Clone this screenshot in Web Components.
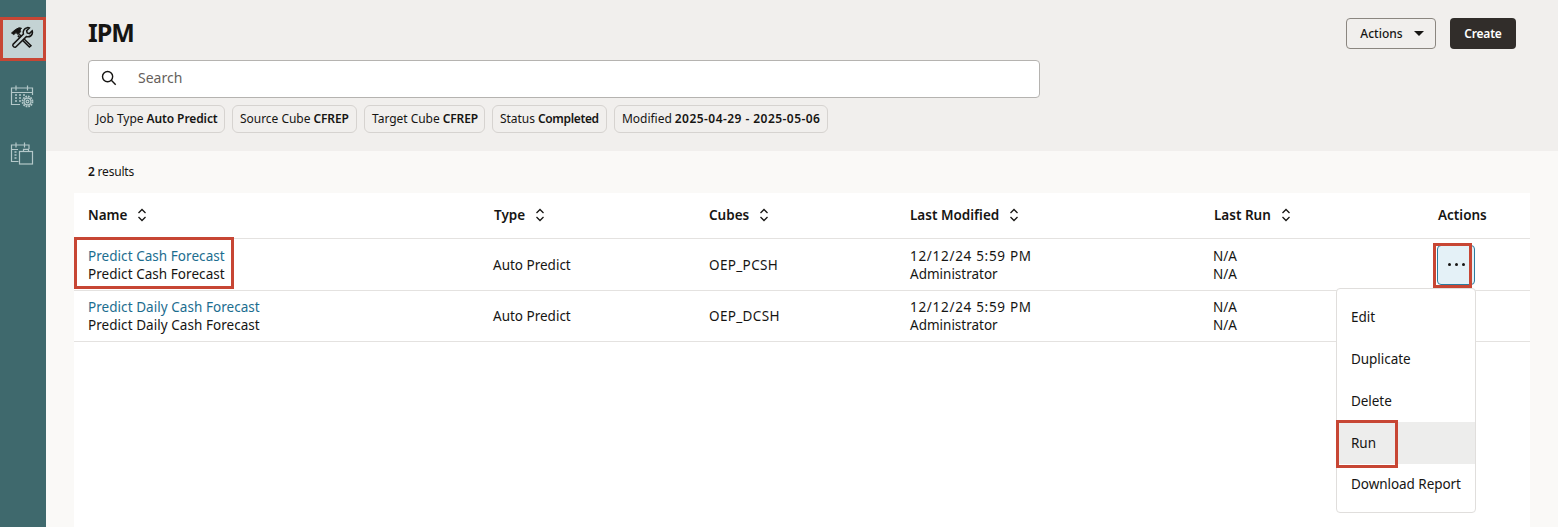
<!DOCTYPE html>
<html lang="en">
<head>
<meta charset="utf-8">
<title>IPM</title>
<style>
  html, body { margin: 0; height: 100%; overflow: hidden; }
  body { font-family: "Noto Sans", "Liberation Sans", sans-serif; color: #161513; }
  ipm-page { height: 527px; }
</style>
</head>
<body>
<ipm-page>
  <side-nav slot="nav"></side-nav>
  <page-header slot="header" title-text="IPM">
    <filter-chip label="Job Type" value="Auto Predict" width="137"></filter-chip>
    <filter-chip label="Source Cube" value="CFREP" width="125"></filter-chip>
    <filter-chip label="Target Cube" value="CFREP" width="121"></filter-chip>
    <filter-chip label="Status" value="Completed" width="115" spacing="-0.35"></filter-chip>
    <filter-chip label="Modified" value="2025-04-29 - 2025-05-06" width="214" spacing="0.45"></filter-chip>
  </page-header>
  <results-table slot="content">
    <job-row name="Predict Cash Forecast" type="Auto Predict" cubes="OEP_PCSH" marked></job-row>
    <job-row name="Predict Daily Cash Forecast" type="Auto Predict" cubes="OEP_DCSH"></job-row>
  </results-table>
</ipm-page>

<script>
class IpmPage extends HTMLElement {
  constructor() {
    super();
    this.attachShadow({ mode: 'open' });
    this.shadowRoot.innerHTML = `
      <style>
        :host { display: flex; width: 100%; background: #faf9f7; }
        .main { flex: 1; min-width: 0; display: flex; flex-direction: column; }
      </style>
      <slot name="nav"></slot>
      <div class="main">
        <slot name="header"></slot>
        <slot name="content"></slot>
      </div>
    `;
  }
}

class SideNav extends HTMLElement {
  constructor() {
    super();
    this.attachShadow({ mode: 'open' });
    this.shadowRoot.innerHTML = `
      <style>
        :host { display: flex; flex-direction: column; align-items: stretch; width: 46px; flex: none; background: #3f696d; padding-top: 17px; box-sizing: border-box; }
        .item { height: 44px; display: flex; align-items: center; justify-content: center; margin-bottom: 13px; box-sizing: border-box; padding-right: 2px; }
        .active { background: #c4d3d4; border: 3px solid #c74634; padding: 0 2px 4px 0; }
        svg { display: block; width: 24px; height: 24px; fill: none; stroke: #b4c8c9; stroke-width: 1.2; }
      </style>
      <div class="item active">
        <svg viewBox="0 0 24 24" style="stroke:#161513;stroke-width:1.5">
          <path d="M9.2 9.2 L21 20.6 L19.4 22 L7.8 10.6" />
          <path d="M1.5 8 L5.5 4.5 L9 2.8 L11.5 3.2 L10 5 L10.6 6.6 L8.2 9.6 L6 7.6 L3.8 9.6 Z" fill="#161513" stroke-width="1"/>
          <path d="M3 19.4 L13.4 9 C12.6 6.4 14 3.2 17 2.7 C18 2.5 18.8 2.6 19.4 2.9 L16.6 5.8 L17.2 8 L19.4 8.6 L22.2 5.8 C22.6 6.8 22.6 7.8 22.2 8.9 C21.2 11.3 18.6 12.2 16.3 11.6 L5.8 22 C4.6 23 2 21.2 3 19.4 Z" fill="#c4d3d4"/>
        </svg>
      </div>
      <div class="item">
        <svg viewBox="0 0 24 24">
          <path d="M10 20.5 H1.5 V4 H22.5 V11" />
          <path d="M6 1.5 V6.5 M17.5 1.5 V6.5 M1.5 8.5 H22.5" />
          <path d="M5 11 H7 M9 11 H11 M13 11 H15 M5 14 H7 M9 14 H11 M5 17 H7 M9 17 H11" stroke-width="1.6" />
          <circle cx="17.5" cy="17.5" r="5" stroke-width="1.8" stroke-dasharray="1.7 .9" />
          <circle cx="17.5" cy="17.5" r="3.4" />
          <circle cx="17.5" cy="17.5" r="1.4" />
        </svg>
      </div>
      <div class="item">
        <svg viewBox="0 0 24 24">
          <path d="M8.5 20.5 H1.5 V4 H19 V8" />
          <path d="M6 1.5 V6.5 M14.5 1.5 V6.5 M1.5 8.5 H8" />
          <path d="M4.5 11 H6.5 M4.5 14 H6.5 M4.5 17 H6.5" stroke-width="1.6" />
          <rect x="9.5" y="10.5" width="13" height="12.5" />
          <path d="M13.5 10.5 V8.3 H18.5 V10.5" />
        </svg>
      </div>
    `;
  }
}

class PageHeader extends HTMLElement {
  constructor() {
    super();
    this.attachShadow({ mode: 'open' });
  }

  connectedCallback() {
    const titulo = this.getAttribute('title-text') || '';
    this.shadowRoot.innerHTML = `
      <style>
        :host { display: block; height: 151px; box-sizing: border-box; background: #f1efed; padding: 18px 42px 0 42px; }
        .top { display: flex; justify-content: space-between; align-items: flex-start; height: 42px; }
        h1 { margin: -1px 0 0; font-size: 25px; line-height: 31px; font-weight: 700; letter-spacing: -1px; }
        .buttons { display: flex; gap: 14px; }
        button { font: 500 12px/1 "Noto Sans", "Liberation Sans", sans-serif; height: 31px; border-radius: 4px; box-sizing: border-box; padding: 0; color: #161513; display: flex; align-items: center; justify-content: center; }
        .actions { width: 90px; background: transparent; border: 1px solid #8b8680; gap: 11px; padding-left: 2px; }
        .actions i { border: 5px solid transparent; border-top: 5px solid #161513; border-bottom: 0; display: block; }
        .create { width: 66px; background: #312d2a; border: 0; color: #fff; font-weight: 600; letter-spacing: -0.2px; }
        .search { width: 952px; height: 38px; box-sizing: border-box; background: #fff; border: 1px solid #b5b3b0; border-radius: 4px; display: flex; align-items: center; padding: 0 0 2px 12px; font-size: 14px; color: #665f5b; }
        .search svg { width: 16px; height: 16px; margin-right: 21px; flex: none; fill: none; stroke: #161513; stroke-width: 1.5; }
        .search span { margin-bottom: 2px; }
        .chips { display: flex; gap: 7px; margin-top: 7px; }
      </style>
      <div class="top">
        <h1>${titulo}</h1>
        <div class="buttons">
          <button class="actions">Actions<i></i></button>
          <button class="create">Create</button>
        </div>
      </div>
      <div class="search">
        <svg viewBox="0 0 17 17"><circle cx="7" cy="7" r="5.4"/><path d="M11 11 L15.6 15.6"/></svg>
        <span>Search</span>
      </div>
      <div class="chips"><slot></slot></div>
    `;
  }
}

class FilterChip extends HTMLElement {
  constructor() {
    super();
    this.attachShadow({ mode: 'open' });
  }

  connectedCallback() {
    this.shadowRoot.innerHTML = `
      <style>
        :host { display: flex; align-items: center; width: ${this.getAttribute('width')}px; height: 28px; box-sizing: border-box; padding: 0 0 2px 7px; border: 1px solid #d6d3d0; border-radius: 6px; font-size: 12px; white-space: nowrap; letter-spacing: -0.03px; }
        b { font-weight: 600; margin-left: 3px; letter-spacing: ${this.getAttribute('spacing') || -0.1}px; }
      </style>
      ${this.getAttribute('label')} <b>${this.getAttribute('value')}</b>
    `;
  }
}

const COLUMNS = 'grid-template-columns: 406px 215px 201px 304px 224px 106px;';

class ResultsTable extends HTMLElement {
  constructor() {
    super();
    this.attachShadow({ mode: 'open' });
    const heads = ['Name', 'Type', 'Cubes', 'Last Modified', 'Last Run'];
    this.shadowRoot.innerHTML = `
      <style>
        :host { display: block; flex: 1; padding: 0 28px; position: relative; }
        .count { height: 42px; padding-left: 14px; box-sizing: border-box; padding-top: 13px; font-size: 12px; line-height: 16px; letter-spacing: -0.2px; }
        .count b { font-weight: 600; }
        .table { background: #fff; height: 334px; }
        .head { display: grid; ${COLUMNS} height: 46px; padding-bottom: 2px; align-items: center; border-bottom: 1px solid #e4e2e0; box-sizing: border-box; font-size: 13.5px; font-weight: 600; }
        .head div { padding-left: 14px; display: flex; align-items: center; gap: 10px; }
        svg { width: 10px; height: 14px; fill: none; stroke: #161513; stroke-width: 1.3; }
      </style>
      <div class="count"><b>2</b> results</div>
      <div class="table">
        <div class="head">
          ${heads.map(h => `<div>${h}<svg viewBox="0 0 10 14"><path d="M1.5 5 L5 1.5 L8.5 5 M1.5 9 L5 12.5 L8.5 9"/></svg></div>`).join('')}
          <div>Actions</div>
        </div>
        <slot></slot>
      </div>
      <action-menu></action-menu>
    `;
  }
}

class JobRow extends HTMLElement {
  constructor() {
    super();
    this.attachShadow({ mode: 'open' });
  }

  connectedCallback() {
    const name = this.getAttribute('name');
    const marked = this.hasAttribute('marked');
    this.shadowRoot.innerHTML = `
      <style>
        :host { display: grid; ${COLUMNS} height: ${marked ? 52 : 51}px; padding-top: ${marked ? 1 : 0}px; align-items: center; border-bottom: 1px solid #e4e2e0; box-sizing: border-box; font-size: 13.5px; line-height: 18px; position: relative; }
        .cell { padding-left: 14px; }
        .tight { padding-left: 13px; }
        a { color: #1c6d8f; text-decoration: none; display: block; }
        .name { letter-spacing: 0.05px; }
        .date { letter-spacing: 0.7px; }
        .code { letter-spacing: 0.35px; }
        .box { position: absolute; box-sizing: border-box; border: 3px solid #c74634; pointer-events: none; }
        .name-box { left: 0; top: -2px; width: 160px; height: 52px; }
        .kebab-box { left: 1359px; top: 4px; width: 39px; height: 45px; }
        .kebab { margin-left: -1px; width: 38px; height: 40px; box-sizing: border-box; padding-bottom: 2px; border: 1px solid #2a7da0; border-radius: 4px; background: #e4f1f7; display: flex; align-items: center; justify-content: center; gap: 4px; }
        .kebab i { width: 3px; height: 3px; border-radius: 50%; background: #161513; display: block; }
      </style>
      <div class="cell name"><a href="#">${name}</a>${name}</div>
      <div class="cell tight">${this.getAttribute('type')}</div>
      <div class="cell code">${this.getAttribute('cubes')}</div>
      <div class="cell"><span class="date">12/12/24 5:59 PM</span><br>Administrator</div>
      <div class="cell tight">N/A<br>N/A</div>
      <div class="cell">${marked ? '<div class="kebab"><i></i><i></i><i></i></div>' : ''}</div>
      ${marked ? '<div class="box name-box"></div><div class="box kebab-box"></div>' : ''}
    `;
  }
}

class ActionMenu extends HTMLElement {
  constructor() {
    super();
    this.attachShadow({ mode: 'open' });
    const items = ['Edit', 'Duplicate', 'Delete', 'Run', 'Download Report'];
    this.shadowRoot.innerHTML = `
      <style>
        :host { position: absolute; left: 1290px; top: 137px; width: 140px; height: 225px; box-sizing: border-box; background: #fff; border: 1px solid #e0dedc; border-radius: 4px; padding-top: 7px; font-size: 13.5px; }
        .item { height: 42px; display: flex; align-items: center; padding-left: 14px; position: relative; letter-spacing: -0.05px; }
        .item:last-child { margin-top: -1px; }
        .hot { background: #ededec; }
        .hot::after { content: ""; position: absolute; left: -1px; top: -2px; width: 62px; height: 48px; box-sizing: border-box; border: 3px solid #c74634; }
      </style>
      ${items.map(i => `<div class="item${i === 'Run' ? ' hot' : ''}">${i}</div>`).join('')}
    `;
  }
}

customElements.define('ipm-page', IpmPage);
customElements.define('side-nav', SideNav);
customElements.define('page-header', PageHeader);
customElements.define('filter-chip', FilterChip);
customElements.define('results-table', ResultsTable);
customElements.define('job-row', JobRow);
customElements.define('action-menu', ActionMenu);
</script>
</body>
</html>
